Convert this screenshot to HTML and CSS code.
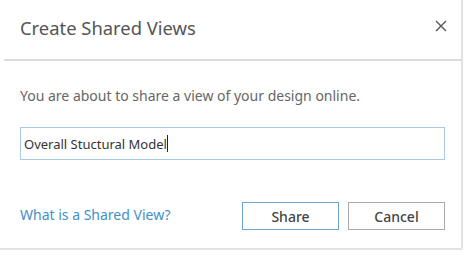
FILE: index.html
```html
<html>
<head>
    <title>Create Shared Views</title>
    <link rel="stylesheet" href="styles.css">
</head>
<body>
<div class="dialog">
    <div class="header">
        <span class="title">Create Shared Views</span>
        <span class="close" title="Close">
            <svg width="12" height="12" viewBox="0 0 12 12">
                <path d="M1 1 L11 11 M11 1 L1 11" stroke="#555" stroke-width="1.4" fill="none"/>
            </svg>
        </span>
    </div>
    <div class="body">
        <p class="intro">You are about to share a view of your design online.</p>
        <div class="field">Overall Stuctural Model<span class="caret"></span></div>
    </div>
    <div class="footer">
        <a class="link" href="#">What is a Shared View?</a>
        <div class="buttons">
            <button class="btn primary">Share</button>
            <button class="btn">Cancel</button>
        </div>
    </div>
</div>
</body>
</html>
```

FILE: styles.css
```css
body {
  margin: 0;
  background: #fff;
  font-family: "Noto Sans", "Open Sans", sans-serif;
}

.dialog {
  width: 461px;
  height: 248px;
  background: #fff;
  border-right: 2px solid #e2e2e2;
  border-bottom: 2px solid #e2e2e2;
  border-bottom-right-radius: 3px;
  display: flex;
  flex-direction: column;
}

.header {
  height: 59px;
  margin-left: 4px;
  padding: 0 14px 0 16px;
  border-bottom: 2px solid #dcdcdc;
  display: flex;
  align-items: center;
  justify-content: space-between;
}

.title {
  font-size: 18.4px;
  color: #555;
  margin-top: -5px;
}

.close {
  display: flex;
  margin-top: -7px;
}

.body {
  padding: 0 16px 0 20px;
}

.intro {
  margin: 25px 0 0;
  font-size: 14px;
  color: #666;
}

.field {
  margin-top: 22px;
  height: 31px;
  border: 1px solid #a9c8e6;
  padding: 0 3px;
  font-size: 13px;
  color: #333;
  display: flex;
  align-items: center;
}

.caret {
  display: inline-block;
  width: 1px;
  height: 17px;
  background: #222;
}

.footer {
  margin-top: 42px;
  padding: 0 16px 0 20px;
  display: flex;
  align-items: center;
  justify-content: space-between;
}

.link {
  font-size: 14px;
  color: #4191c7;
  text-decoration: none;
  margin-top: -3px;
}

.buttons {
  display: flex;
  gap: 9px;
}

.btn {
  width: 97px;
  height: 28px;
  background: #fff;
  border: 1px solid #aaa;
  font-family: inherit;
  font-size: 14px;
  font-weight: 500;
  color: #444;
  padding: 0;
}

.btn.primary {
  border-color: #6fa3cf;
}
```
